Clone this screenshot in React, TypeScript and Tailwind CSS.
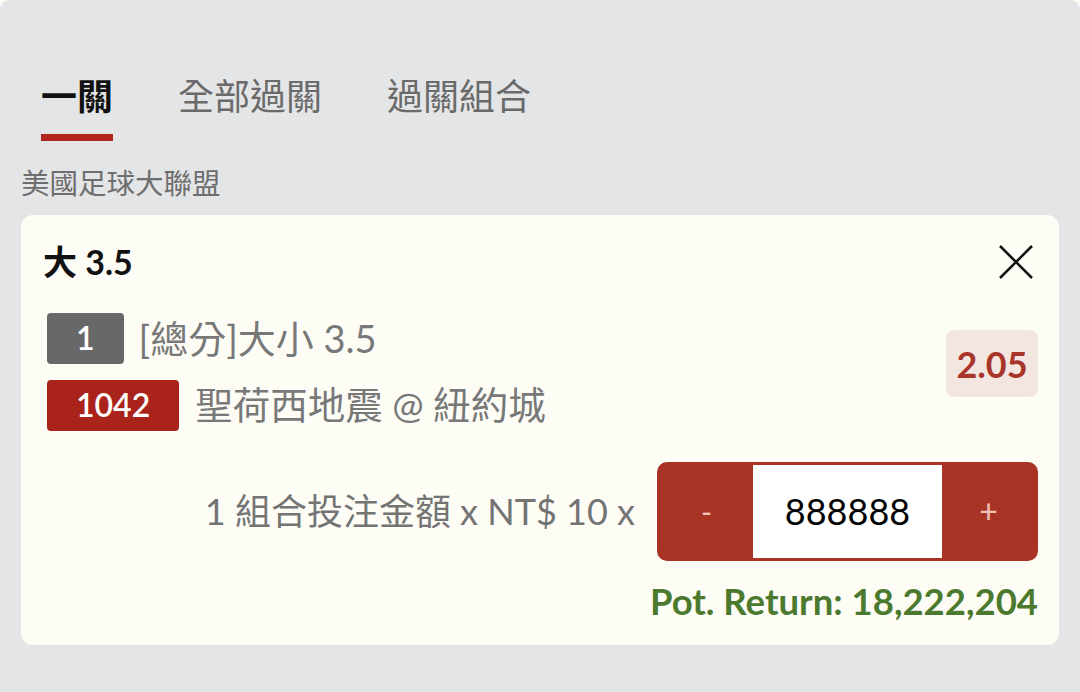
import React from 'react';

const font = { fontFamily: 'Lato, "Noto Sans CJK TC", sans-serif' };

const Badge = ({ text, tone }: { text: string; tone: 'gray' | 'red' }) => (
  <span
    className={`inline-flex h-[51px] items-center justify-center rounded-[4px] px-[29px] text-[32px] font-semibold leading-none text-white ${
      tone === 'gray' ? 'bg-[#686868]' : 'bg-[#a9231a]'
    }`}
  >
    {text}
  </span>
);

export default function App() {
  const tabs = ['一關', '全部過關', '過關組合'];

  return (
    <div className="h-[692px] w-[1080px] overflow-hidden bg-[#fdfdf6]" style={font}>
      <div className="h-full w-full rounded-t-[9px] bg-[#e4e5e7]">
        {/* Tabs */}
        <div className="flex gap-[65px] pl-[41px] pt-[78px]">
          {tabs.map((t, i) => (
            <div key={t} className="flex flex-col">
              <span
                className={`text-[36px] leading-none ${
                  i === 0 ? 'font-bold text-[#111111]' : 'text-[#6a6a6a]'
                }`}
              >
                {t}
              </span>
              <span
                className={`mt-[20px] h-[7px] w-full ${i === 0 ? 'bg-[#b3261e]' : 'bg-transparent'}`}
              />
            </div>
          ))}
        </div>

        {/* League */}
        <div className="mt-[28px] pl-[21px] text-[28.5px] leading-none text-[#6e6e6e]">美國足球大聯盟</div>

        {/* Bet card */}
        <div className="mx-[21px] mt-[17px] rounded-[12px] bg-[#fdfdf6] px-[21px] pb-[26px] pt-[30px]">
          <div className="flex items-center justify-between">
            <span className="pl-[1px] text-[34px] font-bold leading-none text-[#111111]">大 3.5</span>
            <svg width="34" height="34" viewBox="0 0 34 34" className="mr-[5px]">
              <path d="M1 1 L33 33 M33 1 L1 33" stroke="#111" strokeWidth="2.6" fill="none" />
            </svg>
          </div>

          <div className="mt-[34px] flex items-center justify-between">
            <div className="flex flex-col gap-[16px] pl-[5px]">
              <div className="flex items-center gap-[15px]">
                <Badge text="1" tone="gray" />
                <span className="text-[38px] leading-none text-[#787878]">[總分]大小 3.5</span>
              </div>
              <div className="flex items-center gap-[16px]">
                <Badge text="1042" tone="red" />
                <span className="text-[37.5px] leading-none text-[#787878]">聖荷西地震 @ 紐約城</span>
              </div>
            </div>
            <div className="mb-[16px] flex h-[67px] w-[92px] items-center justify-center rounded-[8px] bg-[#f3e6e0] text-[36px] font-bold leading-none text-[#a8352a]">
              2.05
            </div>
          </div>

          <div className="mt-[31px] flex items-center justify-end gap-[22px]">
            <span className="text-[36px] leading-none text-[#747474]">1 組合投注金額 x NT$ 10 x</span>
            <div className="flex h-[99px] w-[381px] overflow-hidden rounded-[10px] border-[3px] border-[#a93426] bg-[#a93426]">
              <div className="flex w-[93px] items-center justify-center text-[30px] leading-none text-[#f1c2b6]">-</div>
              <div className="flex flex-1 items-center justify-center bg-white text-[36px] leading-none text-black">
                888888
              </div>
              <div className="flex w-[93px] items-center justify-center text-[32px] leading-none text-[#f1c2b6]">+</div>
            </div>
          </div>

          <div className="mt-[22px] text-right text-[36.5px] font-bold leading-none text-[#4b7a2f]">
            Pot. Return: 18,222,204
          </div>
        </div>
      </div>
    </div>
  );
}
